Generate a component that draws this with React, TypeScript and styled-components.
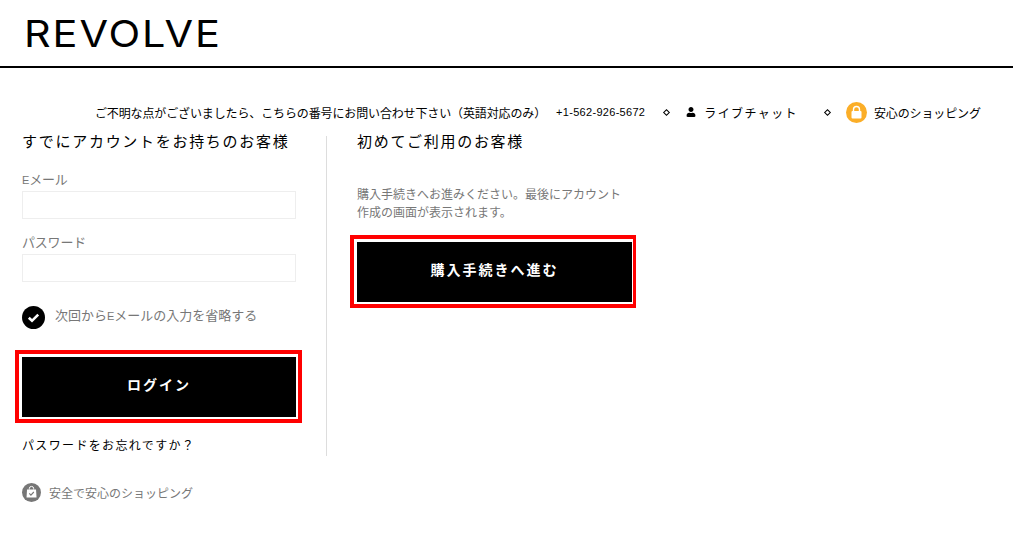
import React from "react";
import styled, { createGlobalStyle } from "styled-components";
import { FaUser } from "react-icons/fa";

const GlobalStyle = createGlobalStyle`
  html, body {
    margin: 0;
    padding: 0;
    background: #fff;
    color: #000;
    font-family: "Liberation Sans", "Noto Sans CJK JP", sans-serif;
  }
`;

const Page = styled.div`
  width: 1013px;
  height: 542px;
  overflow: hidden;
`;

const Header = styled.header`
  box-sizing: border-box;
  border-bottom: 2px solid #000;
  height: 68px;
  padding: 12px 0 0 24px;
`;

const Logo = styled.div`
  font-family: "Inter", sans-serif;
  font-size: 37px;
  line-height: 44px;
  font-weight: 400;
  letter-spacing: 1.7px;
  transform: scaleX(1.12);
  transform-origin: left center;
`;

const ContactBar = styled.div`
  display: flex;
  align-items: center;
  height: 24px;
  margin-top: 32px;
  padding-left: 95px;
  font-size: 12px;
  letter-spacing: -0.13px;
  white-space: nowrap;
`;

const Phone = styled.span`
  margin-left: 10px;
  font-size: 11px;
  letter-spacing: 0.3px;
`;

const Diamond = styled.span<{ $left: number }>`
  width: 3px;
  height: 3px;
  margin-left: ${({ $left }) => $left}px;
  border: 1px solid #000;
  transform: rotate(45deg);
`;

const ChatLink = styled.span`
  display: flex;
  align-items: center;
  gap: 8px;
  margin-left: 17px;
  letter-spacing: 1.4px;
`;

const ShopLink = styled.span`
  display: flex;
  align-items: center;
  gap: 6px;
  margin-left: 16px;
`;

const LockBadge = styled.svg`
  width: 21px;
  height: 21px;
  margin-right: 1px;
`;

const Columns = styled.main`
  display: flex;
  margin-top: 12px;
  padding-left: 22px;
`;

const LeftColumn = styled.section`
  width: 274px;
  height: 320px;
  padding-right: 30px;
  border-right: 1px solid #ddd;
`;

const RightColumn = styled.section`
  width: 275px;
  padding-left: 30px;
`;

const Heading = styled.h2`
  margin: -1px 0 0;
  font-size: 15px;
  line-height: 14px;
  font-weight: 400;
  letter-spacing: 1.7px;
  white-space: nowrap;
`;

const FieldLabel = styled.label`
  display: block;
  margin-bottom: 2px;
  color: #777;
  font-size: 13px;
  line-height: 18px;
  letter-spacing: -0.2px;
`;

const SmallLatin = styled.span`
  font-size: 11px;
`;

const Field = styled.div<{ $top: number }>`
  margin-top: ${({ $top }) => $top}px;
`;

const TextInput = styled.input`
  display: block;
  box-sizing: border-box;
  width: 274px;
  height: 28px;
  border: 1px solid #eee;
  background: #fff;
  outline: none;
`;

const RememberRow = styled.div`
  display: flex;
  align-items: center;
  gap: 10px;
  margin-top: 23px;
  height: 24px;
  color: #777;
  font-size: 13px;
`;

const RememberText = styled.span`
  margin-top: -6px;
`;

const CheckCircle = styled.svg`
  width: 23px;
  height: 23px;
`;

const ButtonFrame = styled.div<{ $top: number; $width: number; $rightBorder: number }>`
  width: ${({ $width }) => $width}px;
  height: 73px;
  box-sizing: border-box;
  margin: ${({ $top }) => $top}px 0 0 -7px;
  border: 4px solid #f00;
  border-right-width: ${({ $rightBorder }) => $rightBorder}px;
  padding: 3px 0 0 3px;
`;

const BlackButton = styled.button<{ $width: number }>`
  display: block;
  width: ${({ $width }) => $width}px;
  height: 60px;
  border: none;
  background: #000;
  color: #fff;
  font-family: inherit;
  font-size: 14px;
  font-weight: 700;
  letter-spacing: 2px;
  padding: 0 0 7px;
`;

const ForgotLink = styled.a`
  display: block;
  margin-top: 15px;
  font-size: 12px;
  line-height: 16px;
  letter-spacing: 1.35px;
`;

const Intro = styled.p`
  margin: 37px 0 0;
  width: 275px;
  color: #777;
  font-size: 12px;
  line-height: 18px;
`;

const SafeRow = styled.div`
  display: flex;
  align-items: center;
  gap: 8px;
  margin: 27px 0 0 22px;
  color: #777;
  font-size: 12px;
`;

const SafeIcon = styled.svg`
  width: 19px;
  height: 19px;
`;

export default function App() {
  return (
    <Page>
      <GlobalStyle />
      <Header>
        <Logo>REVOLVE</Logo>
      </Header>

      <ContactBar>
        ご不明な点がございましたら、こちらの番号にお問い合わせ下さい（英語対応のみ）
        <Phone>+1-562-926-5672</Phone>
        <Diamond $left={19} />
        <ChatLink>
          <FaUser size={10} />
          ライブチャット
        </ChatLink>
        <Diamond $left={27} />
        <ShopLink>
          <LockBadge viewBox="0 0 21 21">
            <circle cx="10.5" cy="10.5" r="10.5" fill="#fbae28" />
            <path d="M7.5 9V7.5a3 3 0 0 1 6 0V9" fill="none" stroke="#fff" strokeWidth="1.4" />
            <rect x="5.5" y="9" width="10" height="7.5" rx="1" fill="#fff" />
          </LockBadge>
          安心のショッピング
        </ShopLink>
      </ContactBar>

      <Columns>
        <LeftColumn>
          <Heading>すでにアカウントをお持ちのお客様</Heading>
          <Field $top={22}>
            <FieldLabel>
              <SmallLatin>E</SmallLatin>メール
            </FieldLabel>
            <TextInput type="text" />
          </Field>
          <Field $top={15}>
            <FieldLabel>パスワード</FieldLabel>
            <TextInput type="password" />
          </Field>
          <RememberRow>
            <CheckCircle viewBox="0 0 23 23">
              <circle cx="11.5" cy="11.5" r="11.5" fill="#000" />
              <path d="M6.8 11.8l3.2 3 6.2-6.2" fill="none" stroke="#fff" strokeWidth="2.6" />
            </CheckCircle>
            <RememberText>
              次回から<SmallLatin>E</SmallLatin>メールの入力を省略する
            </RememberText>
          </RememberRow>
          <ButtonFrame $top={21} $width={287} $rightBorder={4}>
            <BlackButton $width={274}>ログイン</BlackButton>
          </ButtonFrame>
          <ForgotLink>パスワードをお忘れですか？</ForgotLink>
        </LeftColumn>
        <RightColumn>
          <Heading>初めてご利用のお客様</Heading>
          <Intro>
            購入手続きへお進みください。最後にアカウント
            <br />
            作成の画面が表示されます。
          </Intro>
          <ButtonFrame $top={13} $width={286} $rightBorder={3}>
            <BlackButton $width={275}>購入手続きへ進む</BlackButton>
          </ButtonFrame>
        </RightColumn>
      </Columns>

      <SafeRow>
        <SafeIcon viewBox="0 0 19 19">
          <circle cx="9.5" cy="9.5" r="9.5" fill="#777" />
          <path d="M7.3 6.5V5.6a2.2 2.2 0 0 1 4.4 0v0.9" fill="none" stroke="#fff" strokeWidth="1" />
          <path d="M5 6.5h9l0.5 8h-10z" fill="#fff" />
          <path d="M7.3 10.4l1.6 1.7 2.9-3.1" fill="none" stroke="#777" strokeWidth="1.1" />
        </SafeIcon>
        安全で安心のショッピング
      </SafeRow>
    </Page>
  );
}
